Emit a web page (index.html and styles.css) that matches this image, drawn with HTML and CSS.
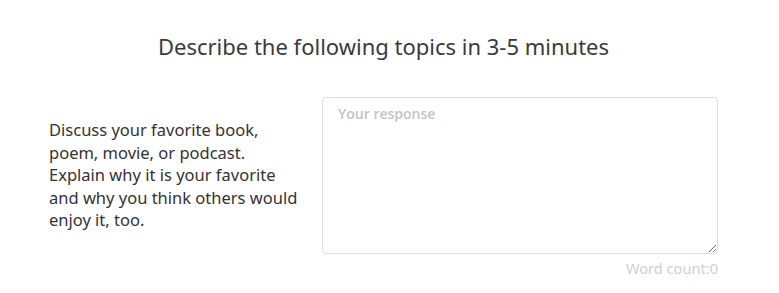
FILE: index.html
```html
<!DOCTYPE html>
<html lang="en">
<head>
<meta charset="utf-8">
<title>Describe</title>
<link rel="stylesheet" href="styles.css">
</head>
<body>
<div class="page">
  <h1 class="title">Describe the following topics in 3-5 minutes</h1>
  <div class="task">
    <p class="prompt">Discuss your favorite book,<br>poem, movie, or podcast.<br>Explain why it is your favorite<br>and why you think others would<br>enjoy it, too.</p>
    <div class="answer">
      <textarea class="response" placeholder="Your response"></textarea>
      <div class="count">Word count:0</div>
    </div>
  </div>
</div>
</body>
</html>
```
FILE: styles.css
```css
* { box-sizing: border-box; }
html, body { margin: 0; padding: 0; background: #fff; }
body { font-family: "Noto Sans", "Open Sans", sans-serif; color: #333; }
.page { width: 779px; height: 293px; overflow: hidden; }
.title {
  margin: 0;
  padding: 32px 12px 0 0;
  text-align: center;
  font-weight: 400;
  font-size: 22px;
  line-height: 28px;
  color: #3a3a3a;
}
.task {
  display: flex;
  align-items: flex-start;
  margin-top: 37px;
  padding: 0 61px 0 49px;
  gap: 12px;
}
.prompt {
  width: 261px;
  flex: none;
  margin: 22px 0 0;
  font-size: 16.5px;
  line-height: 22.5px;
  color: #333;
  white-space: nowrap;
}
.answer { flex: 1; display: flex; flex-direction: column; }
.response {
  display: block;
  width: 100%;
  height: 157px;
  margin: 0;
  padding: 5px 15px;
  border: 1px solid #dcdfe6;
  border-radius: 4px;
  font-family: "Open Sans", sans-serif;
  font-size: 14px;
  line-height: 22px;
  color: #606266;
  resize: vertical;
  outline: none;
}
.response::placeholder { color: #c0c4cc; font-weight: 600; }
.count {
  text-align: right;
  font-size: 14.6px;
  line-height: 20px;
  color: #d0d0d0;
  margin-top: 4px;
}
```
